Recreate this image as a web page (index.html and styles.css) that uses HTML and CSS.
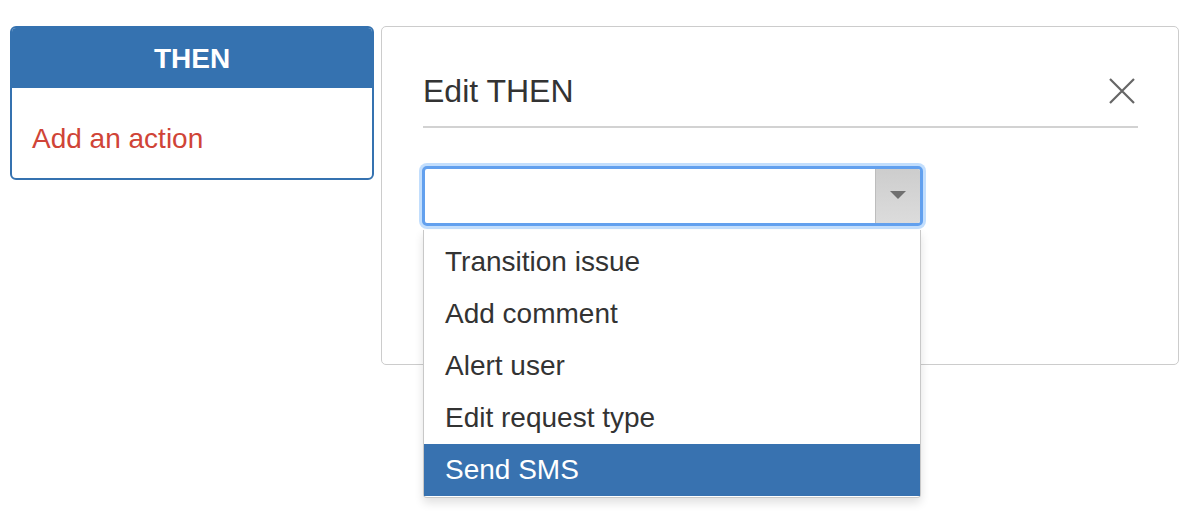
FILE: index.html
```html
<!DOCTYPE html>
<html lang="en">
<head>
<meta charset="utf-8">
<title>Edit THEN</title>
<link rel="stylesheet" href="styles.css">
</head>
<body>
<div class="page">
  <section class="then-card">
    <div class="then-head">THEN</div>
    <div class="then-body"><a class="add-action" href="#">Add an action</a></div>
  </section>
  <section class="editor">
    <header class="editor-head">
      <h2 class="editor-title">Edit THEN</h2>
      <button class="close-btn" type="button" aria-label="Close">
        <svg width="26" height="26" viewBox="0 0 26 26"><path d="M1 1 L25 25 M25 1 L1 25" stroke="#666" stroke-width="2.2" fill="none"/></svg>
      </button>
    </header>
    <div class="select-wrap">
      <div class="select-box">
        <div class="select-value"></div>
        <div class="select-arrow"><span class="tri"></span></div>
      </div>
      <ul class="dropdown">
        <li class="opt">Transition issue</li>
        <li class="opt">Add comment</li>
        <li class="opt">Alert user</li>
        <li class="opt">Edit request type</li>
        <li class="opt active">Send SMS</li>
      </ul>
    </div>
  </section>
</div>
</body>
</html>
```
FILE: styles.css
```css
* { box-sizing: border-box; }
html, body { margin: 0; padding: 0; background: #fff; }
body { font-family: "Liberation Sans", Arial, sans-serif; color: #333; min-height: 522px; }

.page {
  display: flex;
  align-items: flex-start;
  gap: 7px;
  padding: 26px 0 0 10px;
  min-height: 522px;
}

.then-card {
  width: 364px;
  border: 2px solid #3572b0;
  border-radius: 6px;
  overflow: hidden;
  flex: none;
}
.then-head {
  background: #3572b0;
  color: #fff;
  font-weight: bold;
  font-size: 28px;
  height: 60px;
  line-height: 62px;
  text-align: center;
}
.then-body {
  padding: 35px 20px 19px;
  line-height: 32px;
}
.add-action {
  color: #d04437;
  font-size: 28px;
  text-decoration: none;
}

.editor {
  position: relative;
  z-index: 1;
  width: 798px;
  height: 339px;
  border: 1.5px solid #cccccc;
  border-radius: 5px;
  padding: 44px 40px 0 41px;
  flex: none;
}
.editor-head {
  display: flex;
  align-items: center;
  justify-content: space-between;
  border-bottom: 2px solid #d2d2d2;
  padding-bottom: 15px;
}
.editor-title {
  margin: 0;
  font-weight: normal;
  font-size: 32px;
  line-height: 40px;
  color: #333;
}
.close-btn {
  border: 0;
  background: none;
  padding: 0;
  margin-right: 3px;
  width: 26px;
  height: 26px;
  display: flex;
  cursor: pointer;
}

.select-wrap {
  position: relative;
  width: 501px;
  margin-top: 38px;
  margin-left: -1px;
}
.select-box {
  display: flex;
  height: 60px;
  border: 3px solid #62a0ee;
  border-radius: 5px;
  box-shadow: 0 0 0 3px #c2defd;
  background: #fff;
}
.select-value { flex: 1; }
.select-arrow {
  width: 45px;
  border-left: 1px solid #bdbdbd;
  background: linear-gradient(#cdcdcd, #dcdcdc);
  border-radius: 0 2px 2px 0;
  display: flex;
  align-items: center;
  justify-content: center;
}
.tri {
  width: 0;
  height: 0;
  border-left: 8px solid transparent;
  border-right: 8px solid transparent;
  border-top: 8px solid #707070;
  margin-bottom: 2px;
}

.dropdown {
  position: absolute;
  z-index: 10;
  top: 64px;
  left: 1px;
  right: 2px;
  margin: 0;
  padding: 6px 0 1px;
  list-style: none;
  background: #fff;
  border: 1.5px solid #c8c8c8;
  border-top: 0;
  border-radius: 0 0 4px 4px;
  box-shadow: 0 5px 10px rgba(0, 0, 0, 0.12);
}
.opt {
  height: 52px;
  line-height: 52px;
  padding-left: 21px;
  font-size: 28px;
  color: #333;
}
.opt.active {
  background: #3872b0;
  color: #fff;
}
```
